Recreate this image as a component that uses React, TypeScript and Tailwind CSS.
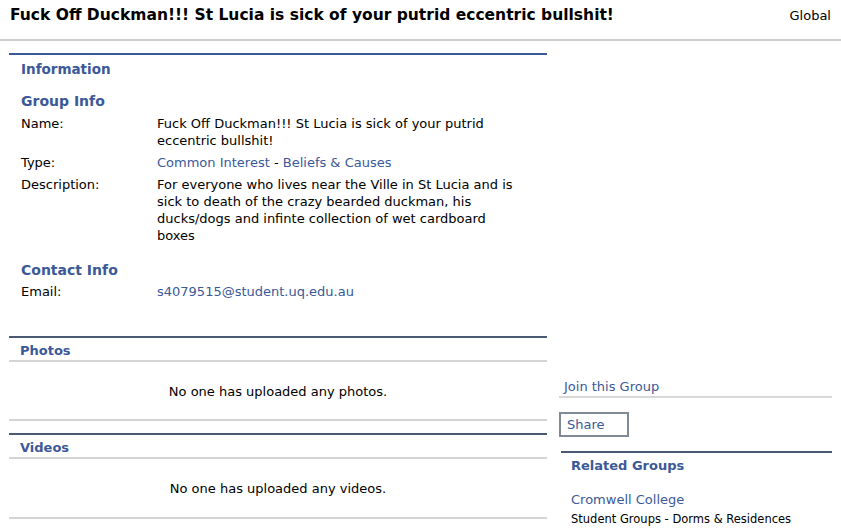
import React from "react"

const font = { fontFamily: '"DejaVu Sans", Verdana, sans-serif' }

function InfoRow({ label, children }: { label: string; children: React.ReactNode }) {
    return (
        <div className="flex leading-[17px]">
            <div className="w-[136px] shrink-0">{label}</div>
            <div className="w-[360px]">{children}</div>
        </div>
    )
}

function EmptySection({ title, text, bodyH }: { title: string; text: string; bodyH: string }) {
    return (
        <div className="border-t-2 border-[#4b5a73]">
            <div className="h-[24px] flex items-center pt-[3px] pl-[11px] border-b-2 border-[#d4d4d4] font-bold text-[13px] text-[#3b5998]">{title}</div>
            <div className={`${bodyH} flex items-center justify-center pt-[2px] text-[13px] text-black border-b-2 border-[#d4d4d4]`}>{text}</div>
        </div>
    )
}

export default function App() {
    return (
        <div className="w-[841px] h-[532px] bg-white overflow-hidden text-black" style={font}>
            <div className="h-[41px] flex items-start justify-between pl-[10px] pr-[10px] pt-[4px] border-b-2 border-[#cccccc]">
                <h1 className="text-[15.5px] font-bold">Fuck Off Duckman!!! St Lucia is sick of your putrid eccentric bullshit!</h1>
                <span className="text-[13px] pt-[2px]">Global</span>
            </div>

            <div className="flex">
                <div className="ml-[9px] w-[538px] mt-[12px]">
                    <div className="border-t-2 border-[#3b5998] h-[283px] pl-[12px] text-[13px]">
                        <div className="pt-[4px] font-bold text-[13.5px] text-[#3b5998]">Information</div>
                        <div className="mt-[12px] font-bold text-[14px] text-[#3b5998]">Group Info</div>
                        <div className="mt-[3px] flex flex-col gap-[5px]">
                            <InfoRow label="Name:">Fuck Off Duckman!!! St Lucia is sick of your putrid eccentric bullshit!</InfoRow>
                            <InfoRow label="Type:">
                                <span className="text-[#3b5998]">Common Interest</span> - <span className="text-[#3b5998]">Beliefs &amp; Causes</span>
                            </InfoRow>
                            <InfoRow label="Description:">
                                For everyone who lives near the Ville in St Lucia and is sick to death of the crazy bearded duckman, his ducks/dogs and infinte collection of wet cardboard boxes
                            </InfoRow>
                        </div>
                        <div className="mt-[16px] font-bold text-[14px] text-[#3b5998]">Contact Info</div>
                        <div className="mt-[2px]">
                            <InfoRow label="Email:">
                                <span className="text-[#3b5998]">s4079515@student.uq.edu.au</span>
                            </InfoRow>
                        </div>
                    </div>
                    <EmptySection title="Photos" text="No one has uploaded any photos." bodyH="h-[59px]" />
                    <div className="h-[12px]" />
                    <EmptySection title="Videos" text="No one has uploaded any videos." bodyH="h-[60px]" />
                </div>

                <div className="ml-[12px] w-[273px] pt-[337px] text-[13px]">
                    <div className="pl-[5px] leading-[18px] border-b-2 border-[#d8d8d8] text-[#3b5998]">Join this Group</div>
                    <div className="mt-[14px] w-[70px] h-[25px] border-2 border-[#7f8a96] flex items-center pl-[6px] text-[#3b5998]">Share</div>
                    <div className="mt-[14px] ml-[2px] border-t-2 border-[#4b5a73] pl-[10px]">
                        <div className="pt-[3px] font-bold text-[#3b5998]">Related Groups</div>
                        <div className="mt-[14px] text-[#3b5998]">Cromwell College</div>
                        <div className="mt-[2px] text-[11.5px] leading-[16px]">Student Groups - Dorms &amp; Residences</div>
                    </div>
                </div>
            </div>
        </div>
    )
}
